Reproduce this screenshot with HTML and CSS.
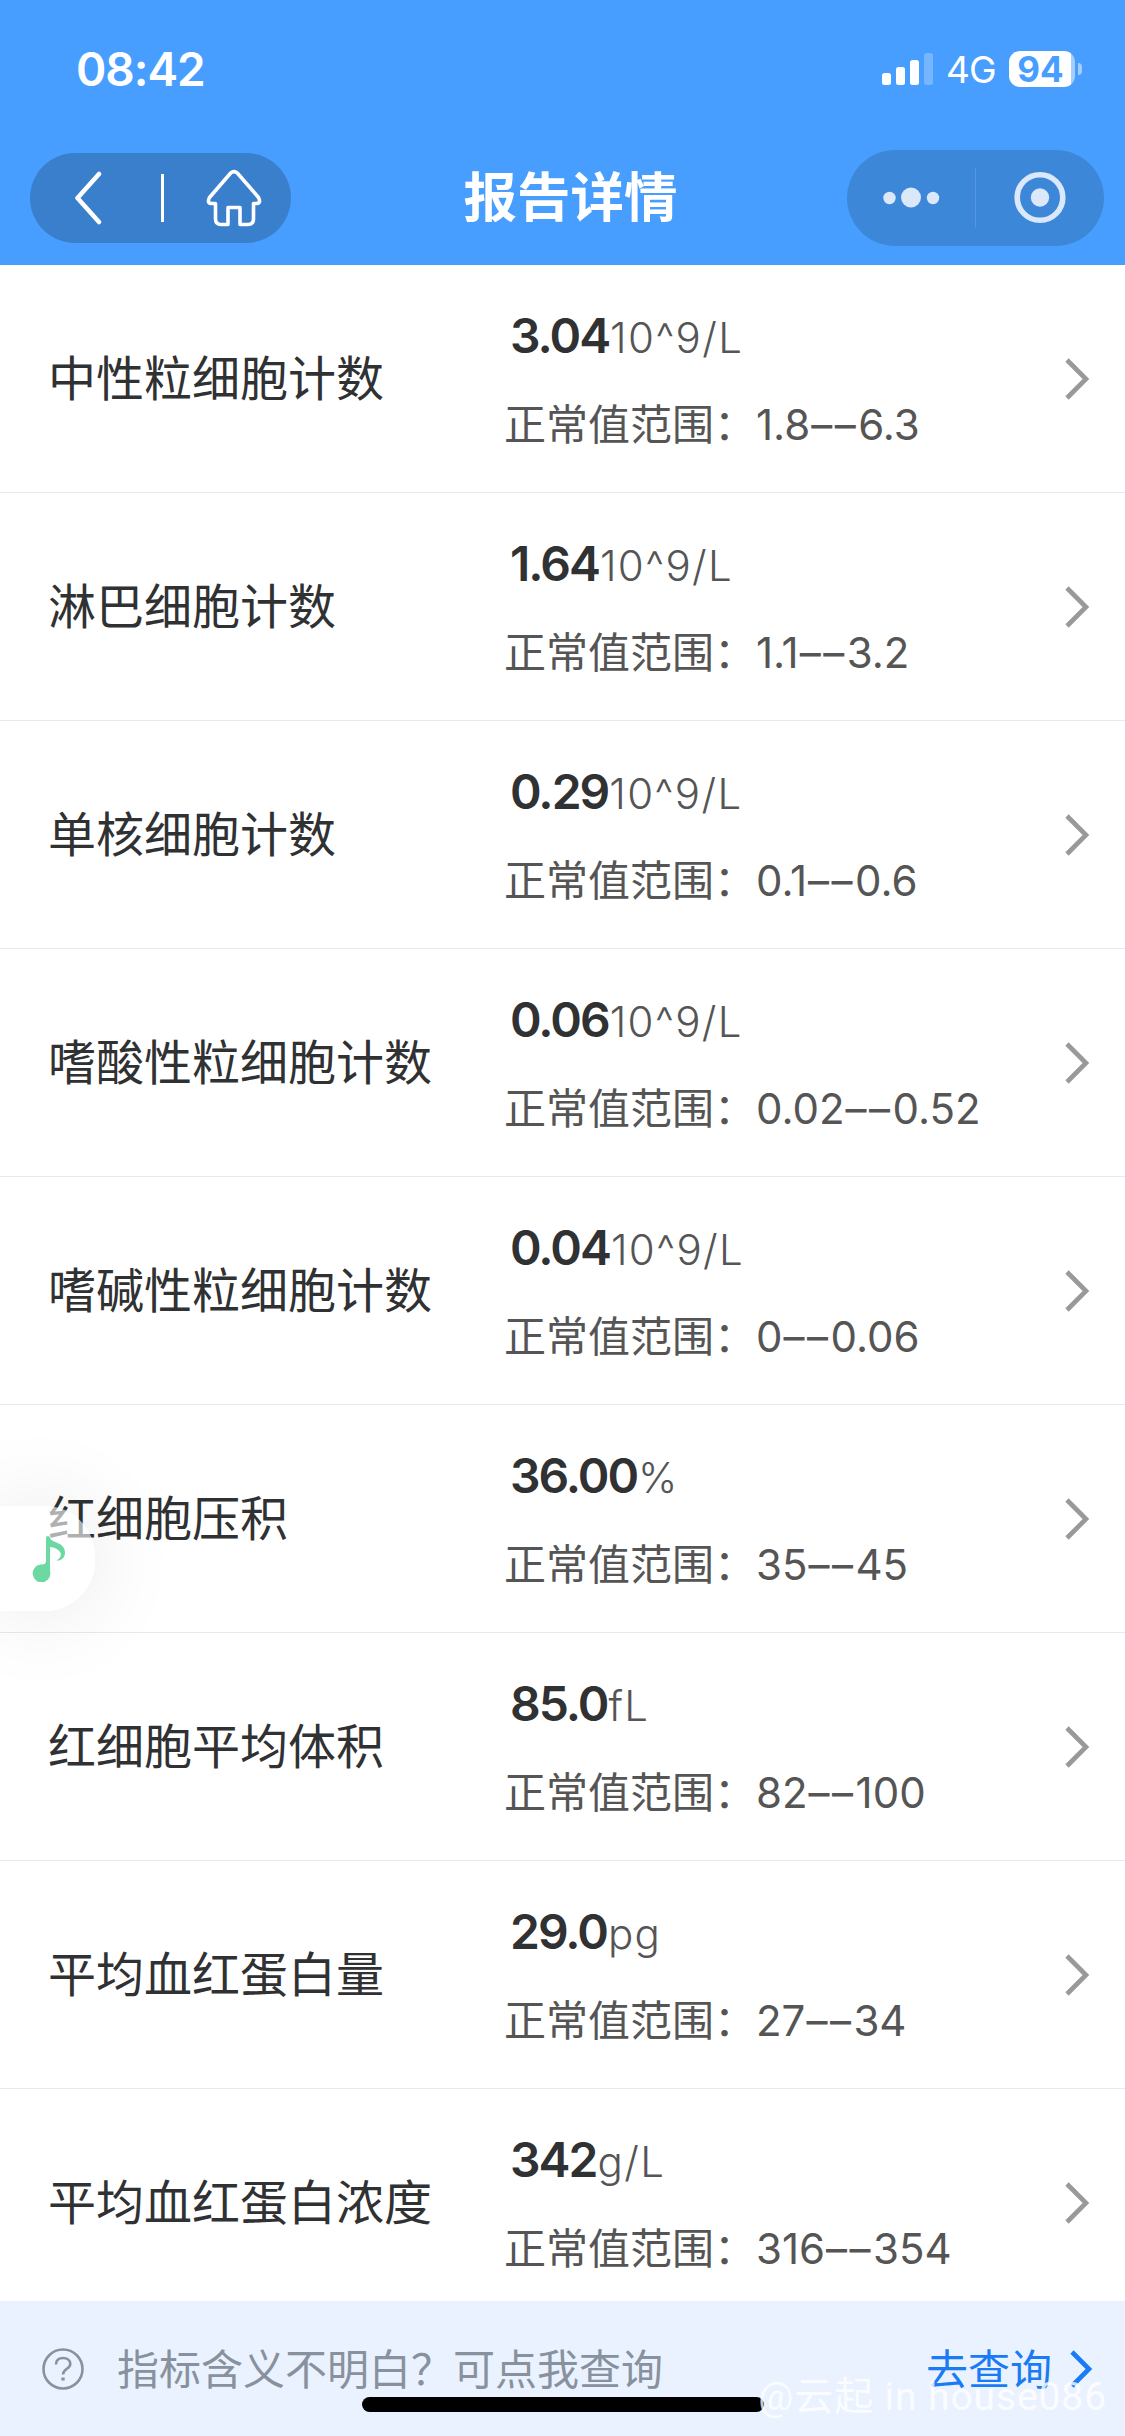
FILE: index.html
```html
<!DOCTYPE html>
<html lang="zh-CN">
<head>
    <meta charset="UTF-8">
    <meta name="viewport" content="width=device-width, initial-scale=1.0">
    <title>报告详情</title>
    <link rel="stylesheet" href="styles.css">
</head>
<body>

    <header class="header">
        <div class="status-bar">
            <span class="time">08:42</span>
            <div class="status-right">
                <svg class="signal" width="51" height="32" viewBox="0 0 51 32" fill="#fff">
                    <rect x="0" y="20" width="9" height="12" rx="2.5"/>
                    <rect x="14" y="14" width="9" height="18" rx="2.5"/>
                    <rect x="28" y="7" width="9" height="25" rx="2.5"/>
                    <rect x="42" y="0" width="9" height="32" rx="2.5" opacity="0.25"/>
                </svg>
                <span class="network">4G</span>
                <span class="battery">94</span>
                <span class="battery-cap"></span>
            </div>
        </div>
        <div class="nav-bar">
            <div class="nav-left">
                <svg width="27" height="54" viewBox="0 0 27 54" fill="none" stroke="#fff" stroke-width="4.500" stroke-linecap="round" stroke-linejoin="round">
                    <path d="M24 3L2.500 27L24 51"/>
                </svg>
                <span class="nav-line"></span>
                <svg class="home-icon" width="56" height="58" viewBox="0 0 56 58" fill="none" stroke="#fff" stroke-width="3.6" stroke-linejoin="round">
                    <path d="M24.5 4.2Q28 1.2 31.5 4.2L52.5 28.5Q55.5 34.5 50 34.5H47.5V50Q47.5 55.5 42 55.5H34V38.5H22V55.5H15Q9.500 55.500 9.500 50V34.500H6Q0.500 34.500 3.500 28.500Z"/>
                </svg>
            </div>
            <h1 class="title">报告详情</h1>
            <div class="nav-right">
                <svg width="257" height="96" viewBox="0 0 257 96">
                    <g fill="#dae8f9">
                        <circle cx="42.500" cy="48" r="6.200"/>
                        <circle cx="64" cy="47.500" r="10"/>
                        <circle cx="86" cy="48" r="6.200"/>
                        <circle cx="193" cy="47.500" r="9.200"/>
                    </g>
                    <path d="M128.500 18V78" stroke="#5496df" stroke-width="1"/>
                    <circle cx="193" cy="47.500" r="22.800" fill="none" stroke="#dae8f9" stroke-width="5.600"/>
                </svg>
            </div>
        </div>
    </header>

    <main class="list">
        <div class="row">
            <div class="name">中性粒细胞计数</div>
            <div class="info">
                <div class="result"><b>3.04</b><span>10^9/L</span></div>
                <div class="range">正常值范围：1.8<span class="dash">––</span>6.3</div>
            </div>
            <svg class="arrow" viewBox="0 0 26 44"><path d="M3 3L22 22L3 41"/></svg>
        </div>
        <div class="row">
            <div class="name">淋巴细胞计数</div>
            <div class="info">
                <div class="result"><b>1.64</b><span>10^9/L</span></div>
                <div class="range">正常值范围：1.1<span class="dash">––</span>3.2</div>
            </div>
            <svg class="arrow" viewBox="0 0 26 44"><path d="M3 3L22 22L3 41"/></svg>
        </div>
        <div class="row">
            <div class="name">单核细胞计数</div>
            <div class="info">
                <div class="result"><b>0.29</b><span>10^9/L</span></div>
                <div class="range">正常值范围：0.1<span class="dash">––</span>0.6</div>
            </div>
            <svg class="arrow" viewBox="0 0 26 44"><path d="M3 3L22 22L3 41"/></svg>
        </div>
        <div class="row">
            <div class="name">嗜酸性粒细胞计数</div>
            <div class="info">
                <div class="result"><b>0.06</b><span>10^9/L</span></div>
                <div class="range">正常值范围：0.02<span class="dash">––</span>0.52</div>
            </div>
            <svg class="arrow" viewBox="0 0 26 44"><path d="M3 3L22 22L3 41"/></svg>
        </div>
        <div class="row">
            <div class="name">嗜碱性粒细胞计数</div>
            <div class="info">
                <div class="result"><b>0.04</b><span>10^9/L</span></div>
                <div class="range">正常值范围：0<span class="dash">––</span>0.06</div>
            </div>
            <svg class="arrow" viewBox="0 0 26 44"><path d="M3 3L22 22L3 41"/></svg>
        </div>
        <div class="row">
            <div class="name">红细胞压积</div>
            <div class="info">
                <div class="result"><b>36.00</b><span>%</span></div>
                <div class="range">正常值范围：35<span class="dash">––</span>45</div>
            </div>
            <svg class="arrow" viewBox="0 0 26 44"><path d="M3 3L22 22L3 41"/></svg>
        </div>
        <div class="row">
            <div class="name">红细胞平均体积</div>
            <div class="info">
                <div class="result"><b>85.0</b><span>fL</span></div>
                <div class="range">正常值范围：82<span class="dash">––</span>100</div>
            </div>
            <svg class="arrow" viewBox="0 0 26 44"><path d="M3 3L22 22L3 41"/></svg>
        </div>
        <div class="row">
            <div class="name">平均血红蛋白量</div>
            <div class="info">
                <div class="result"><b>29.0</b><span>pg</span></div>
                <div class="range">正常值范围：27<span class="dash">––</span>34</div>
            </div>
            <svg class="arrow" viewBox="0 0 26 44"><path d="M3 3L22 22L3 41"/></svg>
        </div>
        <div class="row">
            <div class="name">平均血红蛋白浓度</div>
            <div class="info">
                <div class="result"><b>342</b><span>g/L</span></div>
                <div class="range">正常值范围：316<span class="dash">––</span>354</div>
            </div>
            <svg class="arrow" viewBox="0 0 26 44"><path d="M3 3L22 22L3 41"/></svg>
        </div>
    </main>

    <!-- 音乐悬浮按钮 -->
    <div class="music">
        <svg width="34" height="46" viewBox="0 0 34 46" fill="#6bd9a1">
            <path d="M14 2Q14 0 16 0Q17.500 0 18 2C19.500 7 33 6 33 16.500C33 22 29 25 24.500 24.500C28 22.500 29.500 20 28.500 17C27 13 22 11.500 18 11V35A8.800 9 0 1 1 8.500 28.500Q14 29 14 25Z"/>
        </svg>
    </div>

    <footer class="footer">
        <svg class="help" width="44" height="44" viewBox="0 0 44 44" fill="none" stroke="#88929e" stroke-width="2.600">
            <circle cx="22" cy="22" r="19.500"/>
            <path d="M15 17.500C15 13 18 11 22 11C26 11 29.300 13.300 29.300 17C29.300 22 22 21.500 22 27.500"/>
            <path d="M22 30.500V33.500" stroke-width="3.400"/>
        </svg>
        <span class="tip">指标含义不明白？可点我查询</span>
        <a class="query">去查询</a>
        <svg class="query-arrow" width="24" height="40" viewBox="0 0 24 40"><path d="M3 3L20 20L3 37"/></svg>
    </footer>

    <div class="home-indicator"></div>
    <div class="watermark">@云起 in house086</div>

</body>
</html>
```
FILE: styles.css
```css
* {
    box-sizing: border-box;
}
body {
    position: relative;
    margin: 0;
    width: 1125px;
    height: 2436px;
    display: flex;
    flex-direction: column;
    overflow: hidden;
    background-color: #fff;
    color: #303133;
    font-family: Inter, "Noto Sans CJK SC", sans-serif;
}
svg {
    display: block;
    flex: none;
}
.header {
    height: 265px;
    flex: none;
    background-color: #479eff;
    color: #fff;
}
.status-bar {
    height: 138px;
    padding: 0 43px 0 76px;
    display: flex;
    align-items: center;
    justify-content: space-between;
}
.time {
    font-size: 46px;
    font-weight: 600;
    letter-spacing: -1px;
}
.status-right {
    display: flex;
    align-items: center;
}
.network {
    margin-left: 13px;
    width: 63px;
    font-size: 37px;
    letter-spacing: -1px;
}
.battery {
    width: 66px;
    height: 36px;
    border-radius: 11px;
    background: linear-gradient(to right, #fff 62px, #a3ceff 62px);
    color: #479eff;
    font-size: 35px;
    line-height: 36px;
    font-weight: 700;
    text-align: center;
    padding-right: 3px;
}
.battery-cap {
    width: 4px;
    height: 12px;
    margin-left: 3px;
    border-radius: 0 4px 4px 0;
    background-color: #a3ceff;
}
.nav-bar {
    height: 120px;
    padding: 0 21px 0 30px;
    display: grid;
    grid-template-columns: 261px 1fr 257px;
    align-items: center;
}
.nav-left {
    height: 90px;
    padding: 0 29px 0 45px;
    border-radius: 45px;
    background-color: #3a7fcc;
    display: flex;
    align-items: center;
    justify-content: space-between;
}
.nav-line {
    width: 3px;
    height: 48px;
    margin-left: 16px;
    background-color: #fff;
}
.title {
    margin: 0;
    padding: 0 0 9px 3px;
    font-size: 53.5px;
    font-weight: 600;
    text-align: center;
}
.nav-right {
    height: 96px;
    border-radius: 48px;
    background-color: #3d87d8;
}
.list {
    height: 2036px;
    flex: none;
    overflow: hidden;
}
.row {
    height: 228px;
    padding: 0 35px 0 48px;
    border-bottom: 1px solid #e8e9eb;
    display: flex;
    align-items: center;
}
.name {
    width: 456px;
    padding-bottom: 8px;
    font-size: 48px;
}
.info {
    flex: 1;
    padding-top: 4px;
    color: #555;
    font-size: 42px;
}
.result {
    height: 60px;
    padding-left: 6px;
    line-height: 60px;
    margin-bottom: 29px;
}
.result b {
    color: #303133;
    font-size: 48px;
    font-weight: 600;
    letter-spacing: -2px;
}
.result span {
    margin-left: 1px;
    font-weight: 350;
    letter-spacing: 1.4px;
}
.range {
    height: 60px;
    line-height: 60px;
}
.dash {
    margin-left: 1px;
    letter-spacing: 2.5px;
    font-feature-settings: "calt" 0;
}
.arrow {
    width: 26px;
    height: 44px;
    fill: none;
    stroke: #999;
    stroke-width: 4.6;
}
.music {
    position: absolute;
    left: 0;
    top: 1506px;
    width: 95px;
    height: 105px;
    padding: 30px 0 0 32px;
    border-radius: 0 50px 50px 0;
    background-color: rgba(255, 255, 255, 0.62);
    box-shadow: 0 0 90px rgba(0, 0, 0, 0.1);
}
.footer {
    height: 135px;
    flex: none;
    padding: 0 32px 0 41px;
    background-color: #eaf2ff;
    display: flex;
    align-items: center;
    font-size: 42px;
}
.tip {
    margin-left: 32px;
    padding-bottom: 4px;
    flex: 1;
    color: #88929e;
}
.query {
    color: #1a7cf5;
    padding-bottom: 4px;
    margin-right: 17px;
}
.query-arrow {
    fill: none;
    stroke: #1a7cf5;
    stroke-width: 4.6;
}
.home-indicator {
    position: absolute;
    left: 362px;
    top: 2397px;
    width: 402px;
    height: 15px;
    border-radius: 8px;
    background-color: #000;
}
.watermark {
    position: absolute;
    right: 18px;
    top: 2372px;
    color: rgba(255, 255, 255, 0.8);
    font-family: Roboto, "Noto Sans CJK SC", sans-serif;
    font-size: 39px;
    line-height: 50px;
    letter-spacing: 0.9px;
    white-space: nowrap;
}
```
